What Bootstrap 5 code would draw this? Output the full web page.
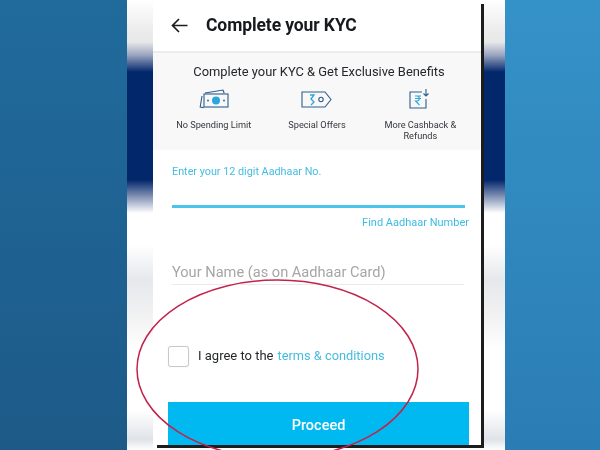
<!DOCTYPE html>
<html lang="en">
<head>
<meta charset="utf-8">
<title>Complete your KYC</title>
<link href="https://cdn.jsdelivr.net/npm/bootstrap@5.3.0/dist/css/bootstrap.min.css" rel="stylesheet">
<style>
html,body{width:600px;height:450px;overflow:hidden;margin:0;background:#fff;font-family:Roboto,"Liberation Sans",sans-serif}
.stage{width:600px;height:450px;position:relative;overflow:hidden;filter:blur(.35px)}
.side-l{width:127px;background:linear-gradient(180deg,#206b9c,#1d5a88)}
.side-r{width:95px;background:linear-gradient(180deg,#3592c8,#2a7db4)}
.mid{width:378px;padding-left:26px;background:linear-gradient(180deg,#fff 0,#ececec 30px,#e8e8e8 42px,#9aa5c0 55px,#02276b 72px,#02276b 180px,#8d9bbb 198px,#fff 213px,#fff 245px,#e6e8ec 280px,#f3f3f3 320px,#fff 350px,#fff 410px,#dfe3e8 440px,#fff 450px)}
.phone{width:331px;height:448px;padding-right:3px;background:linear-gradient(#1c1c1c,#1c1c1c) right 4px/3px 100% no-repeat,#fff}
.top-bar{height:53px;padding-left:18px;border-bottom:2px solid #ececec;gap:18px}
.top-title{font-size:17.5px;font-weight:700;color:#16191d;letter-spacing:-.1px}
.perks{height:97px;background:#f8f8f9;padding:10px 9px 0 9px}
.perks-head{font-size:12.9px;color:#24272b;line-height:18px;margin:0 0 8px 4px}
.perk{width:104px;font-size:9.2px;line-height:11px;color:#33373b}
.perk svg{display:block;margin:0 auto 8px;height:22px}
.form-zone{padding:15px 14px 0 15px}
.hint{font-size:10.8px;line-height:13px;color:#45bde0;padding-left:4px}
.rule-on{height:3px;background:#4cc4ea;margin:27px 2px 0 4px}
.find{font-size:11px;line-height:14px;color:#3bbce3;text-align:right;margin:8px -2px 0 0}
.name-field{font-size:14.6px;line-height:18px;color:#a6a6a6;margin:33px 3px 0 4px;padding-bottom:3px;border-bottom:1px solid #eaeaea}
.agree{margin-top:60px;height:22px;gap:9px;font-size:13px;color:#26292c}
.box{width:21px;height:21px;border:1px solid #c9c9c9;border-radius:3px;background:#fff;box-shadow:0 0 1px #ddd}
.tc{color:#45bcdf;margin-left:-5px;font-size:12.8px}
.go{display:block;width:301px;height:43px;margin-top:35px;padding-top:10px;background:#00b9f1;border:0;border-radius:0;color:#fff;font-size:14.5px;font-weight:500}
.go:hover{background:#00b9f1;color:#fff}
.phone-foot{height:3px;margin-left:4px;margin-right:-3px;background:#1c1c1c}
.oval{position:absolute;left:134px;top:278px;pointer-events:none}
</style>
</head>
<body>
<div class="stage d-flex">
  <div class="side-l"></div>
  <div class="mid">
    <div class="phone d-flex flex-column">
      <div class="top-bar d-flex align-items-center">
        <svg width="17" height="15" viewBox="0 0 17 15" fill="none" stroke="#1a1d21" stroke-width="1.7"><path d="M16.5 7.5H1.5M8 1 1.5 7.5 8 14"/></svg>
        <span class="top-title">Complete your KYC</span>
      </div>
      <div class="perks">
        <div class="perks-head text-center">Complete your KYC &amp; Get Exclusive Benefits</div>
        <div class="d-flex">
          <div class="perk text-center">
            <svg width="30" height="22" viewBox="0 0 30 22" fill="none" stroke="#2f5d8a" stroke-width="1.1"><path d="M3 7 1.2 18l3.5.6M6 4l18-3 1.2 3.200"/><rect x="5" y="5" width="24" height="13" fill="#f8f8f9"/><circle cx="17" cy="11.500" r="4" fill="#2ba6dd" stroke="none"/><circle cx="9" cy="11.500" r=".9" fill="#2f5d8a" stroke="none"/><circle cx="25" cy="11.500" r=".9" fill="#2f5d8a" stroke="none"/></svg>
            No Spending Limit
          </div>
          <div class="perk text-center">
            <svg width="31" height="22" viewBox="0 0 31 22" fill="none" stroke="#2f5d8a" stroke-width="1.1"><path d="M1 3h23l6 7.500-6 7.500H1z"/><path d="M9 6h4l-3 4 3 3-3 3" stroke="#2ba6dd" stroke-width="1.3"/><circle cx="20" cy="10.500" r="2.200"/></svg>
            Special Offers
          </div>
          <div class="perk text-center">
            <svg width="22" height="22" viewBox="0 0 22 22" fill="none" stroke="#2f5d8a" stroke-width="1.1"><path d="M13 3H1v16h16v-9"/><path d="M6 7h6M6 9.500h6M8 7c3 0 3 5 0 5H6.500l4 4" stroke="#2ba6dd" stroke-width="1.1"/><path d="M17 0v7M14.500 4.500 17 7l2.500-2.500"/></svg>
            More Cashback &amp; Refunds
          </div>
        </div>
      </div>
      <div class="form-zone">
        <div class="hint">Enter your 12 digit Aadhaar No.</div>
        <div class="rule-on"></div>
        <div class="find">Find Aadhaar Number</div>
        <div class="name-field">Your Name (as on Aadhaar Card)</div>
        <div class="agree d-flex align-items-center">
          <span class="box"></span>
          <span>I agree to the</span>
          <span class="tc">terms &amp; conditions</span>
        </div>
        <button class="btn go" type="button">Proceed</button>
      </div>
      <div class="phone-foot"></div>
    </div>
  </div>
  <div class="side-r"></div>
  <svg class="oval" width="290" height="180" viewBox="0 0 290 180" fill="none"><ellipse cx="143.500" cy="91" rx="140.500" ry="89" stroke="#c2234c" stroke-width="1.500"/></svg>
</div>
<script src="https://cdn.jsdelivr.net/npm/bootstrap@5.3.0/dist/js/bootstrap.bundle.min.js"></script>
</body>
</html>
